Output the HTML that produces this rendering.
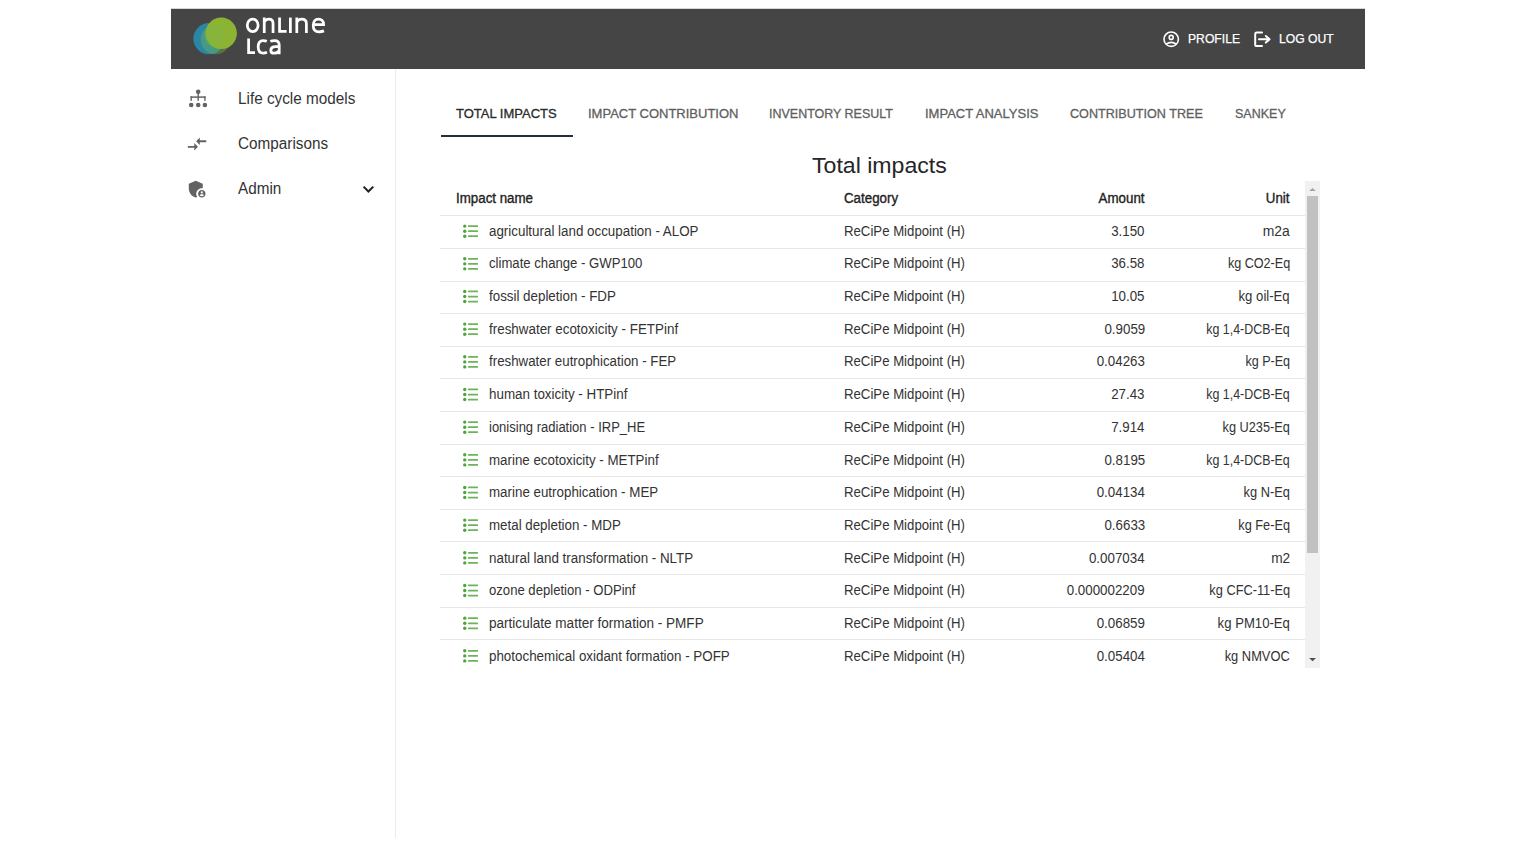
<!DOCTYPE html>
<html><head><meta charset="utf-8">
<style>
*{box-sizing:border-box;margin:0;padding:0}
html,body{width:1536px;height:846px;overflow:hidden;background:#fff;font-family:"Liberation Sans",sans-serif;color:#333}
.abs{position:absolute}
.abs svg{display:block}
#hdr{left:171px;top:9px;width:1194px;height:60px;background:#454545}
#vline{left:395px;top:69px;width:1px;height:769px;background:#ececec}
.nav{position:absolute;left:238px;font-size:15.3px;line-height:1;color:#333;white-space:nowrap;transform-origin:0 12.95px;transform:scale(1,1.06)}
.tab{position:absolute;top:107.10px;font-size:13px;line-height:1;color:#5f5f5f;white-space:nowrap;-webkit-text-stroke:0.3px #5f5f5f}
#title{position:absolute;left:812.3px;top:155.08px;font-size:22px;line-height:1;color:#262626;white-space:nowrap;transform-origin:0 0;transform:scaleX(1.05)}
.th{position:absolute;top:191.52px;font-size:13.8px;line-height:1;color:#222;white-space:nowrap;-webkit-text-stroke:0.35px #222;transform:scaleX(0.9659)}
.c{position:absolute;font-size:13.8px;line-height:1;color:#333;white-space:nowrap}
.ln{position:absolute;left:440px;width:865px;height:1px;background:#e6e6e6}
.hl{position:absolute;font-size:13px;line-height:1;color:#fff;white-space:nowrap;-webkit-text-stroke:0.25px #fff;transform-origin:0 0;transform:scaleX(0.935)}
</style></head><body>
<div id="hdr" class="abs"></div>
<div class="abs" style="left:171px;top:8px;width:1194px;height:1px;background:#d6d8d8"></div>
<div id="vline" class="abs"></div>

<!-- logo -->
<svg class="abs" style="left:188px;top:12px" width="56" height="48" viewBox="0 0 56 48">
<defs>
<pattern id="dots" width="2" height="2" patternUnits="userSpaceOnUse"><circle cx="1" cy="1" r="0.72" fill="#72b84c"/></pattern>
<pattern id="dots2" width="2" height="2" patternUnits="userSpaceOnUse"><circle cx="1" cy="1" r="0.55" fill="#72b85a"/></pattern>
</defs>
<circle cx="21" cy="26.7" r="15.6" fill="#2a86a4"/>
<circle cx="27.5" cy="27.5" r="14.8" fill="url(#dots)"/>
<circle cx="33.2" cy="21.3" r="15.7" fill="#8cb331"/>
<circle cx="26.5" cy="24" r="10.5" fill="url(#dots2)"/>
</svg>
<svg class="abs" style="left:0;top:0" width="340" height="60" viewBox="0 0 340 60" fill="none" stroke="#fff" stroke-width="2.75">
<ellipse cx="252.7" cy="25.3" rx="5.4" ry="6.3"/>
<path d="M264.25 33 V17.6 M264.25 22.2 C265.3 20 267 19.1 268.9 19.1 C271.7 19.1 273.05 20.8 273.05 23.6 V33"/>
<path d="M279.55 17.6 V31.45 H286.6"/>
<path d="M290.4 17.6 V33"/>
<path d="M296.8 33 V17.6 M296.8 22.2 C297.9 20 299.7 19.1 301.7 19.1 C305 19.1 306.4 20.8 306.4 23.6 V33"/>
<path d="M313.3 24.5 H323.6 C323.6 21.2 321.5 19.1 318.4 19.1 C315.2 19.1 313.2 21.8 313.2 25.4 C313.2 29.4 315.5 31.8 319.1 31.8 C321.1 31.8 322.7 31.4 324 30.9"/>
<path d="M248.6 38.5 V52.7 H255"/>
<path d="M266.8 41.3 C265.6 40.8 264.4 40.6 263.2 40.6 C259.8 40.6 258.2 43.3 258.2 47 C258.2 50.7 259.8 53.1 263.3 53.1 C264.7 53.1 265.9 52.8 267 52.3"/>
<path d="M270.3 41.3 C271.7 40.8 273.2 40.6 274.6 40.6 C277.8 40.6 279.2 42.1 279.2 45.2 V54.2 M279.2 46.4 C277.9 46.4 276.4 46.4 274.9 46.7 C271.8 47.1 270.8 48.6 270.8 50.4 C270.8 52.3 272.2 53.2 274.1 53.2 C276.5 53.2 278.3 51.9 279.2 50.6"/>
</svg>
<!-- profile icon -->
<svg class="abs" style="left:1161px;top:29px" width="20" height="20" viewBox="0 0 20 20" fill="none" stroke="#fff" stroke-width="1.6">
<circle cx="10.2" cy="10.2" r="7.2"/>
<circle cx="10.2" cy="8.4" r="2"/>
<path d="M5 15.2 Q10.2 11.6 15.4 15.2"/>
</svg>
<!-- logout icon -->
<svg class="abs" style="left:1250px;top:29px" width="24" height="20" viewBox="0 0 24 20" fill="none" stroke="#fff" stroke-width="2" stroke-linecap="round" stroke-linejoin="round">
<path d="M12 3.6 H6.8 Q5.2 3.6 5.2 5.2 V15.4 Q5.2 17 6.8 17 H12"/>
<path d="M9 10.2 H19.4 M15.8 7 L19.6 10.2 L15.8 13.6"/>
</svg>
<!-- sidebar icons -->
<svg class="abs" style="left:186px;top:86px" width="24" height="24" viewBox="0 0 24 24" fill="#636363">
<circle cx="12.2" cy="5.7" r="2.3"/>
<circle cx="5.2" cy="19" r="2.3"/><circle cx="12.2" cy="19" r="2.3"/><circle cx="18.9" cy="19" r="2.3"/>
<rect x="11.5" y="7" width="1.4" height="7.8"/>
<rect x="4.6" y="10.35" width="15" height="1.5"/>
<rect x="4.5" y="10.35" width="1.4" height="4.5"/>
<rect x="18.2" y="10.35" width="1.4" height="4.5"/>
</svg>
<svg class="abs" style="left:185.96px;top:133.2px;transform-origin:0 0;transform:scale(0.92)" width="24" height="24" viewBox="0 0 24 24" fill="#636363">
<path d="M9.01 14H2v2h7.01v3L13 15l-3.99-4v3zm5.98-1v-3H22V8h-7.01V5L11 9l3.99 4z"/>
</svg>
<svg class="abs" style="left:186px;top:178.1px;transform-origin:0 0;transform:scale(0.93)" width="24" height="24" viewBox="0 0 24 24" fill="#636363">
<path d="M17 11c.34 0 .67.04 1 .09V6.27L10.5 3 3 6.27v4.91c0 4.54 3.2 8.73 7.5 9.82.55-.14 1.08-.33 1.6-.55-.69-.98-1.1-2.17-1.1-3.45 0-3.31 2.690-6 6-6z"/>
<path d="M17 13c-2.21 0-4 1.79-4 4s1.79 4 4 4 4-1.79 4-4-1.790-4-4-4zm0 1.38c.62 0 1.12.51 1.12 1.12s-.51 1.12-1.12 1.12-1.12-.51-1.12-1.12.5-1.12 1.12-1.12zm0 5.37c-.93 0-1.74-.46-2.24-1.17.05-.72 1.51-1.08 2.24-1.08s2.19.36 2.240 1.08c-.5.71-1.31 1.17-2.24 1.17z"/>
</svg>
<!-- chevron -->
<svg class="abs" style="left:360px;top:182px" width="16" height="14" viewBox="0 0 16 14" fill="none" stroke="#222" stroke-width="2">
<path d="M3.6 4.6 L8.4 9.5 L13.3 4.6"/>
</svg>

<div class="hl" style="left:1188px;top:32.30px">PROFILE</div>
<div class="hl" style="left:1279px;top:32.30px">LOG OUT</div>

<div class="nav" style="top:90.95px">Life cycle models</div>
<div class="nav" style="top:135.95px">Comparisons</div>
<div class="nav" style="top:180.95px">Admin</div>

<div class="tab" style="left:456px;color:#2b2b2b;-webkit-text-stroke:0.3px #2b2b2b">TOTAL IMPACTS</div>
<div class="tab" style="left:588px">IMPACT CONTRIBUTION</div>
<div class="tab" style="left:768.5px;transform-origin:0 0;transform:scaleX(0.96)">INVENTORY RESULT</div>
<div class="tab" style="left:925px">IMPACT ANALYSIS</div>
<div class="tab" style="left:1070px;transform-origin:0 0;transform:scaleX(0.97)">CONTRIBUTION TREE</div>
<div class="tab" style="left:1234.5px;transform-origin:0 0;transform:scaleX(0.962)">SANKEY</div>
<div class="abs" style="left:441px;top:134.5px;width:132px;height:2px;background:#252c3a"></div>

<div id="title">Total impacts</div>
<div class="th" style="left:456px;transform-origin:0 0">Impact name</div>
<div class="th" style="left:844px;transform-origin:0 0">Category</div>
<div class="th" style="right:391px;transform-origin:100% 0">Amount</div>
<div class="th" style="right:246px;transform-origin:100% 0">Unit</div>
<div class="c" style="left:489px;top:224.62px;transform-origin:0 0;transform:scaleX(0.9687)">agricultural land occupation - ALOP</div>
<div class="c" style="left:844px;top:224.62px;transform-origin:0 0;transform:scaleX(0.9563)">ReCiPe Midpoint (H)</div>
<div class="c r" style="right:391px;top:224.62px;transform-origin:100% 0;transform:scaleX(0.9659)">3.150</div>
<div class="c r" style="right:246px;top:224.62px;transform-origin:100% 0;transform:scaleX(1.0084)">m2a</div>
<div class="abs" style="left:463px;top:223px"><svg class="li" width="16" height="18" viewBox="0 0 16 18"><g transform="translate(0 0.70)"><g fill="#4fa53c"><circle cx="1.75" cy="2.4" r="1.7"/><circle cx="1.75" cy="7.5" r="1.7"/><circle cx="1.75" cy="12.5" r="1.7"/></g><g fill="#6cb35a"><rect x="5" y="1.55" width="10" height="1.75" rx="0.5"/><rect x="5" y="6.65" width="10" height="1.75" rx="0.5"/><rect x="5" y="11.65" width="10" height="1.75" rx="0.5"/></g></g></svg></div>
<div class="ln" style="top:215.30px"></div>
<div class="c" style="left:489px;top:257.33px;transform-origin:0 0;transform:scaleX(0.9522)">climate change - GWP100</div>
<div class="c" style="left:844px;top:257.33px;transform-origin:0 0;transform:scaleX(0.9563)">ReCiPe Midpoint (H)</div>
<div class="c r" style="right:391px;top:257.33px;transform-origin:100% 0;transform:scaleX(0.9659)">36.58</div>
<div class="c r" style="right:246px;top:257.33px;transform-origin:100% 0;transform:scaleX(0.9139)">kg CO2-Eq</div>
<div class="abs" style="left:463px;top:256px"><svg class="li" width="16" height="18" viewBox="0 0 16 18"><g transform="translate(0 0.37)"><g fill="#4fa53c"><circle cx="1.75" cy="2.4" r="1.7"/><circle cx="1.75" cy="7.5" r="1.7"/><circle cx="1.75" cy="12.5" r="1.7"/></g><g fill="#6cb35a"><rect x="5" y="1.55" width="10" height="1.75" rx="0.5"/><rect x="5" y="6.65" width="10" height="1.75" rx="0.5"/><rect x="5" y="11.65" width="10" height="1.75" rx="0.5"/></g></g></svg></div>
<div class="ln" style="top:247.92px"></div>
<div class="c" style="left:489px;top:290.03px;transform-origin:0 0;transform:scaleX(0.9675)">fossil depletion - FDP</div>
<div class="c" style="left:844px;top:290.03px;transform-origin:0 0;transform:scaleX(0.9563)">ReCiPe Midpoint (H)</div>
<div class="c r" style="right:391px;top:290.03px;transform-origin:100% 0;transform:scaleX(0.9659)">10.05</div>
<div class="c r" style="right:246px;top:290.03px;transform-origin:100% 0;transform:scaleX(0.9527)">kg oil-Eq</div>
<div class="abs" style="left:463px;top:289px"><svg class="li" width="16" height="18" viewBox="0 0 16 18"><g transform="translate(0 0.04)"><g fill="#4fa53c"><circle cx="1.75" cy="2.4" r="1.7"/><circle cx="1.75" cy="7.5" r="1.7"/><circle cx="1.75" cy="12.5" r="1.7"/></g><g fill="#6cb35a"><rect x="5" y="1.55" width="10" height="1.75" rx="0.5"/><rect x="5" y="6.65" width="10" height="1.75" rx="0.5"/><rect x="5" y="11.65" width="10" height="1.75" rx="0.5"/></g></g></svg></div>
<div class="ln" style="top:280.53px"></div>
<div class="c" style="left:489px;top:322.74px;transform-origin:0 0;transform:scaleX(0.9711)">freshwater ecotoxicity - FETPinf</div>
<div class="c" style="left:844px;top:322.74px;transform-origin:0 0;transform:scaleX(0.9563)">ReCiPe Midpoint (H)</div>
<div class="c r" style="right:391px;top:322.74px;transform-origin:100% 0;transform:scaleX(0.9659)">0.9059</div>
<div class="c r" style="right:246px;top:322.74px;transform-origin:100% 0;transform:scaleX(0.9008)">kg 1,4-DCB-Eq</div>
<div class="abs" style="left:463px;top:321px"><svg class="li" width="16" height="18" viewBox="0 0 16 18"><g transform="translate(0 0.71)"><g fill="#4fa53c"><circle cx="1.75" cy="2.4" r="1.7"/><circle cx="1.75" cy="7.5" r="1.7"/><circle cx="1.75" cy="12.5" r="1.7"/></g><g fill="#6cb35a"><rect x="5" y="1.55" width="10" height="1.75" rx="0.5"/><rect x="5" y="6.65" width="10" height="1.75" rx="0.5"/><rect x="5" y="11.65" width="10" height="1.75" rx="0.5"/></g></g></svg></div>
<div class="ln" style="top:313.14px"></div>
<div class="c" style="left:489px;top:355.45px;transform-origin:0 0;transform:scaleX(0.9649)">freshwater eutrophication - FEP</div>
<div class="c" style="left:844px;top:355.45px;transform-origin:0 0;transform:scaleX(0.9563)">ReCiPe Midpoint (H)</div>
<div class="c r" style="right:391px;top:355.45px;transform-origin:100% 0;transform:scaleX(0.9659)">0.04263</div>
<div class="c r" style="right:246px;top:355.45px;transform-origin:100% 0;transform:scaleX(0.9105)">kg P-Eq</div>
<div class="abs" style="left:463px;top:354px"><svg class="li" width="16" height="18" viewBox="0 0 16 18"><g transform="translate(0 0.38)"><g fill="#4fa53c"><circle cx="1.75" cy="2.4" r="1.7"/><circle cx="1.75" cy="7.5" r="1.7"/><circle cx="1.75" cy="12.5" r="1.7"/></g><g fill="#6cb35a"><rect x="5" y="1.55" width="10" height="1.75" rx="0.5"/><rect x="5" y="6.65" width="10" height="1.75" rx="0.5"/><rect x="5" y="11.65" width="10" height="1.75" rx="0.5"/></g></g></svg></div>
<div class="ln" style="top:345.76px"></div>
<div class="c" style="left:489px;top:388.15px;transform-origin:0 0;transform:scaleX(0.9708)">human toxicity - HTPinf</div>
<div class="c" style="left:844px;top:388.15px;transform-origin:0 0;transform:scaleX(0.9563)">ReCiPe Midpoint (H)</div>
<div class="c r" style="right:391px;top:388.15px;transform-origin:100% 0;transform:scaleX(0.9659)">27.43</div>
<div class="c r" style="right:246px;top:388.15px;transform-origin:100% 0;transform:scaleX(0.9008)">kg 1,4-DCB-Eq</div>
<div class="abs" style="left:463px;top:387px"><svg class="li" width="16" height="18" viewBox="0 0 16 18"><g transform="translate(0 0.04)"><g fill="#4fa53c"><circle cx="1.75" cy="2.4" r="1.7"/><circle cx="1.75" cy="7.5" r="1.7"/><circle cx="1.75" cy="12.5" r="1.7"/></g><g fill="#6cb35a"><rect x="5" y="1.55" width="10" height="1.75" rx="0.5"/><rect x="5" y="6.65" width="10" height="1.75" rx="0.5"/><rect x="5" y="11.65" width="10" height="1.75" rx="0.5"/></g></g></svg></div>
<div class="ln" style="top:378.38px"></div>
<div class="c" style="left:489px;top:420.86px;transform-origin:0 0;transform:scaleX(0.9424)">ionising radiation - IRP_HE</div>
<div class="c" style="left:844px;top:420.86px;transform-origin:0 0;transform:scaleX(0.9563)">ReCiPe Midpoint (H)</div>
<div class="c r" style="right:391px;top:420.86px;transform-origin:100% 0;transform:scaleX(0.9659)">7.914</div>
<div class="c r" style="right:246px;top:420.86px;transform-origin:100% 0;transform:scaleX(0.9232)">kg U235-Eq</div>
<div class="abs" style="left:463px;top:419px"><svg class="li" width="16" height="18" viewBox="0 0 16 18"><g transform="translate(0 0.71)"><g fill="#4fa53c"><circle cx="1.75" cy="2.4" r="1.7"/><circle cx="1.75" cy="7.5" r="1.7"/><circle cx="1.75" cy="12.5" r="1.7"/></g><g fill="#6cb35a"><rect x="5" y="1.55" width="10" height="1.75" rx="0.5"/><rect x="5" y="6.65" width="10" height="1.75" rx="0.5"/><rect x="5" y="11.65" width="10" height="1.75" rx="0.5"/></g></g></svg></div>
<div class="ln" style="top:410.99px"></div>
<div class="c" style="left:489px;top:453.57px;transform-origin:0 0;transform:scaleX(0.9659)">marine ecotoxicity - METPinf</div>
<div class="c" style="left:844px;top:453.57px;transform-origin:0 0;transform:scaleX(0.9563)">ReCiPe Midpoint (H)</div>
<div class="c r" style="right:391px;top:453.57px;transform-origin:100% 0;transform:scaleX(0.9659)">0.8195</div>
<div class="c r" style="right:246px;top:453.57px;transform-origin:100% 0;transform:scaleX(0.9008)">kg 1,4-DCB-Eq</div>
<div class="abs" style="left:463px;top:452px"><svg class="li" width="16" height="18" viewBox="0 0 16 18"><g transform="translate(0 0.38)"><g fill="#4fa53c"><circle cx="1.75" cy="2.4" r="1.7"/><circle cx="1.75" cy="7.5" r="1.7"/><circle cx="1.75" cy="12.5" r="1.7"/></g><g fill="#6cb35a"><rect x="5" y="1.55" width="10" height="1.75" rx="0.5"/><rect x="5" y="6.65" width="10" height="1.75" rx="0.5"/><rect x="5" y="11.65" width="10" height="1.75" rx="0.5"/></g></g></svg></div>
<div class="ln" style="top:443.61px"></div>
<div class="c" style="left:489px;top:486.27px;transform-origin:0 0;transform:scaleX(0.9677)">marine eutrophication - MEP</div>
<div class="c" style="left:844px;top:486.27px;transform-origin:0 0;transform:scaleX(0.9563)">ReCiPe Midpoint (H)</div>
<div class="c r" style="right:391px;top:486.27px;transform-origin:100% 0;transform:scaleX(0.9659)">0.04134</div>
<div class="c r" style="right:246px;top:486.27px;transform-origin:100% 0;transform:scaleX(0.9289)">kg N-Eq</div>
<div class="abs" style="left:463px;top:485px"><svg class="li" width="16" height="18" viewBox="0 0 16 18"><g transform="translate(0 0.05)"><g fill="#4fa53c"><circle cx="1.75" cy="2.4" r="1.7"/><circle cx="1.75" cy="7.5" r="1.7"/><circle cx="1.75" cy="12.5" r="1.7"/></g><g fill="#6cb35a"><rect x="5" y="1.55" width="10" height="1.75" rx="0.5"/><rect x="5" y="6.65" width="10" height="1.75" rx="0.5"/><rect x="5" y="11.65" width="10" height="1.75" rx="0.5"/></g></g></svg></div>
<div class="ln" style="top:476.22px"></div>
<div class="c" style="left:489px;top:518.98px;transform-origin:0 0;transform:scaleX(0.9659)">metal depletion - MDP</div>
<div class="c" style="left:844px;top:518.98px;transform-origin:0 0;transform:scaleX(0.9563)">ReCiPe Midpoint (H)</div>
<div class="c r" style="right:391px;top:518.98px;transform-origin:100% 0;transform:scaleX(0.9659)">0.6633</div>
<div class="c r" style="right:246px;top:518.98px;transform-origin:100% 0;transform:scaleX(0.9222)">kg Fe-Eq</div>
<div class="abs" style="left:463px;top:517px"><svg class="li" width="16" height="18" viewBox="0 0 16 18"><g transform="translate(0 0.72)"><g fill="#4fa53c"><circle cx="1.75" cy="2.4" r="1.7"/><circle cx="1.75" cy="7.5" r="1.7"/><circle cx="1.75" cy="12.5" r="1.7"/></g><g fill="#6cb35a"><rect x="5" y="1.55" width="10" height="1.75" rx="0.5"/><rect x="5" y="6.65" width="10" height="1.75" rx="0.5"/><rect x="5" y="11.65" width="10" height="1.75" rx="0.5"/></g></g></svg></div>
<div class="ln" style="top:508.84px"></div>
<div class="c" style="left:489px;top:551.69px;transform-origin:0 0;transform:scaleX(0.9693)">natural land transformation - NLTP</div>
<div class="c" style="left:844px;top:551.69px;transform-origin:0 0;transform:scaleX(0.9563)">ReCiPe Midpoint (H)</div>
<div class="c r" style="right:391px;top:551.69px;transform-origin:100% 0;transform:scaleX(0.9659)">0.007034</div>
<div class="c r" style="right:246px;top:551.69px;transform-origin:100% 0;transform:scaleX(0.9928)">m2</div>
<div class="abs" style="left:463px;top:550px"><svg class="li" width="16" height="18" viewBox="0 0 16 18"><g transform="translate(0 0.39)"><g fill="#4fa53c"><circle cx="1.75" cy="2.4" r="1.7"/><circle cx="1.75" cy="7.5" r="1.7"/><circle cx="1.75" cy="12.5" r="1.7"/></g><g fill="#6cb35a"><rect x="5" y="1.55" width="10" height="1.75" rx="0.5"/><rect x="5" y="6.65" width="10" height="1.75" rx="0.5"/><rect x="5" y="11.65" width="10" height="1.75" rx="0.5"/></g></g></svg></div>
<div class="ln" style="top:541.45px"></div>
<div class="c" style="left:489px;top:584.40px;transform-origin:0 0;transform:scaleX(0.9504)">ozone depletion - ODPinf</div>
<div class="c" style="left:844px;top:584.40px;transform-origin:0 0;transform:scaleX(0.9563)">ReCiPe Midpoint (H)</div>
<div class="c r" style="right:391px;top:584.40px;transform-origin:100% 0;transform:scaleX(0.9659)">0.000002209</div>
<div class="c r" style="right:246px;top:584.40px;transform-origin:100% 0;transform:scaleX(0.9275)">kg CFC-11-Eq</div>
<div class="abs" style="left:463px;top:583px"><svg class="li" width="16" height="18" viewBox="0 0 16 18"><g transform="translate(0 0.06)"><g fill="#4fa53c"><circle cx="1.75" cy="2.4" r="1.7"/><circle cx="1.75" cy="7.5" r="1.7"/><circle cx="1.75" cy="12.5" r="1.7"/></g><g fill="#6cb35a"><rect x="5" y="1.55" width="10" height="1.75" rx="0.5"/><rect x="5" y="6.65" width="10" height="1.75" rx="0.5"/><rect x="5" y="11.65" width="10" height="1.75" rx="0.5"/></g></g></svg></div>
<div class="ln" style="top:574.07px"></div>
<div class="c" style="left:489px;top:617.10px;transform-origin:0 0;transform:scaleX(0.9824)">particulate matter formation - PMFP</div>
<div class="c" style="left:844px;top:617.10px;transform-origin:0 0;transform:scaleX(0.9563)">ReCiPe Midpoint (H)</div>
<div class="c r" style="right:391px;top:617.10px;transform-origin:100% 0;transform:scaleX(0.9659)">0.06859</div>
<div class="c r" style="right:246px;top:617.10px;transform-origin:100% 0;transform:scaleX(0.9525)">kg PM10-Eq</div>
<div class="abs" style="left:463px;top:615px"><svg class="li" width="16" height="18" viewBox="0 0 16 18"><g transform="translate(0 0.73)"><g fill="#4fa53c"><circle cx="1.75" cy="2.4" r="1.7"/><circle cx="1.75" cy="7.5" r="1.7"/><circle cx="1.75" cy="12.5" r="1.7"/></g><g fill="#6cb35a"><rect x="5" y="1.55" width="10" height="1.75" rx="0.5"/><rect x="5" y="6.65" width="10" height="1.75" rx="0.5"/><rect x="5" y="11.65" width="10" height="1.75" rx="0.5"/></g></g></svg></div>
<div class="ln" style="top:606.68px"></div>
<div class="c" style="left:489px;top:649.81px;transform-origin:0 0;transform:scaleX(0.9688)">photochemical oxidant formation - POFP</div>
<div class="c" style="left:844px;top:649.81px;transform-origin:0 0;transform:scaleX(0.9563)">ReCiPe Midpoint (H)</div>
<div class="c r" style="right:391px;top:649.81px;transform-origin:100% 0;transform:scaleX(0.9659)">0.05404</div>
<div class="c r" style="right:246px;top:649.81px;transform-origin:100% 0;transform:scaleX(0.9328)">kg NMVOC</div>
<div class="abs" style="left:463px;top:648px"><svg class="li" width="16" height="18" viewBox="0 0 16 18"><g transform="translate(0 0.40)"><g fill="#4fa53c"><circle cx="1.75" cy="2.4" r="1.7"/><circle cx="1.75" cy="7.5" r="1.7"/><circle cx="1.75" cy="12.5" r="1.7"/></g><g fill="#6cb35a"><rect x="5" y="1.55" width="10" height="1.75" rx="0.5"/><rect x="5" y="6.65" width="10" height="1.75" rx="0.5"/><rect x="5" y="11.65" width="10" height="1.75" rx="0.5"/></g></g></svg></div>
<div class="ln" style="top:639.30px"></div>
<!-- scrollbar -->
<div class="abs" style="left:1305px;top:181px;width:15px;height:486.6px;background:#f1f1f1"></div>
<div class="abs" style="left:1307px;top:196px;width:11px;height:357px;background:#c1c1c1"></div>
<svg class="abs" style="left:1305px;top:181px" width="15" height="487" viewBox="0 0 15 487">
<path d="M4.2 10.1 L7.5 7 L10.8 10.1Z" fill="#a3a3a3"/>
<path d="M4.1 477 L7.6 480.3 L11 477Z" fill="#505050"/>
</svg>
</body></html>
